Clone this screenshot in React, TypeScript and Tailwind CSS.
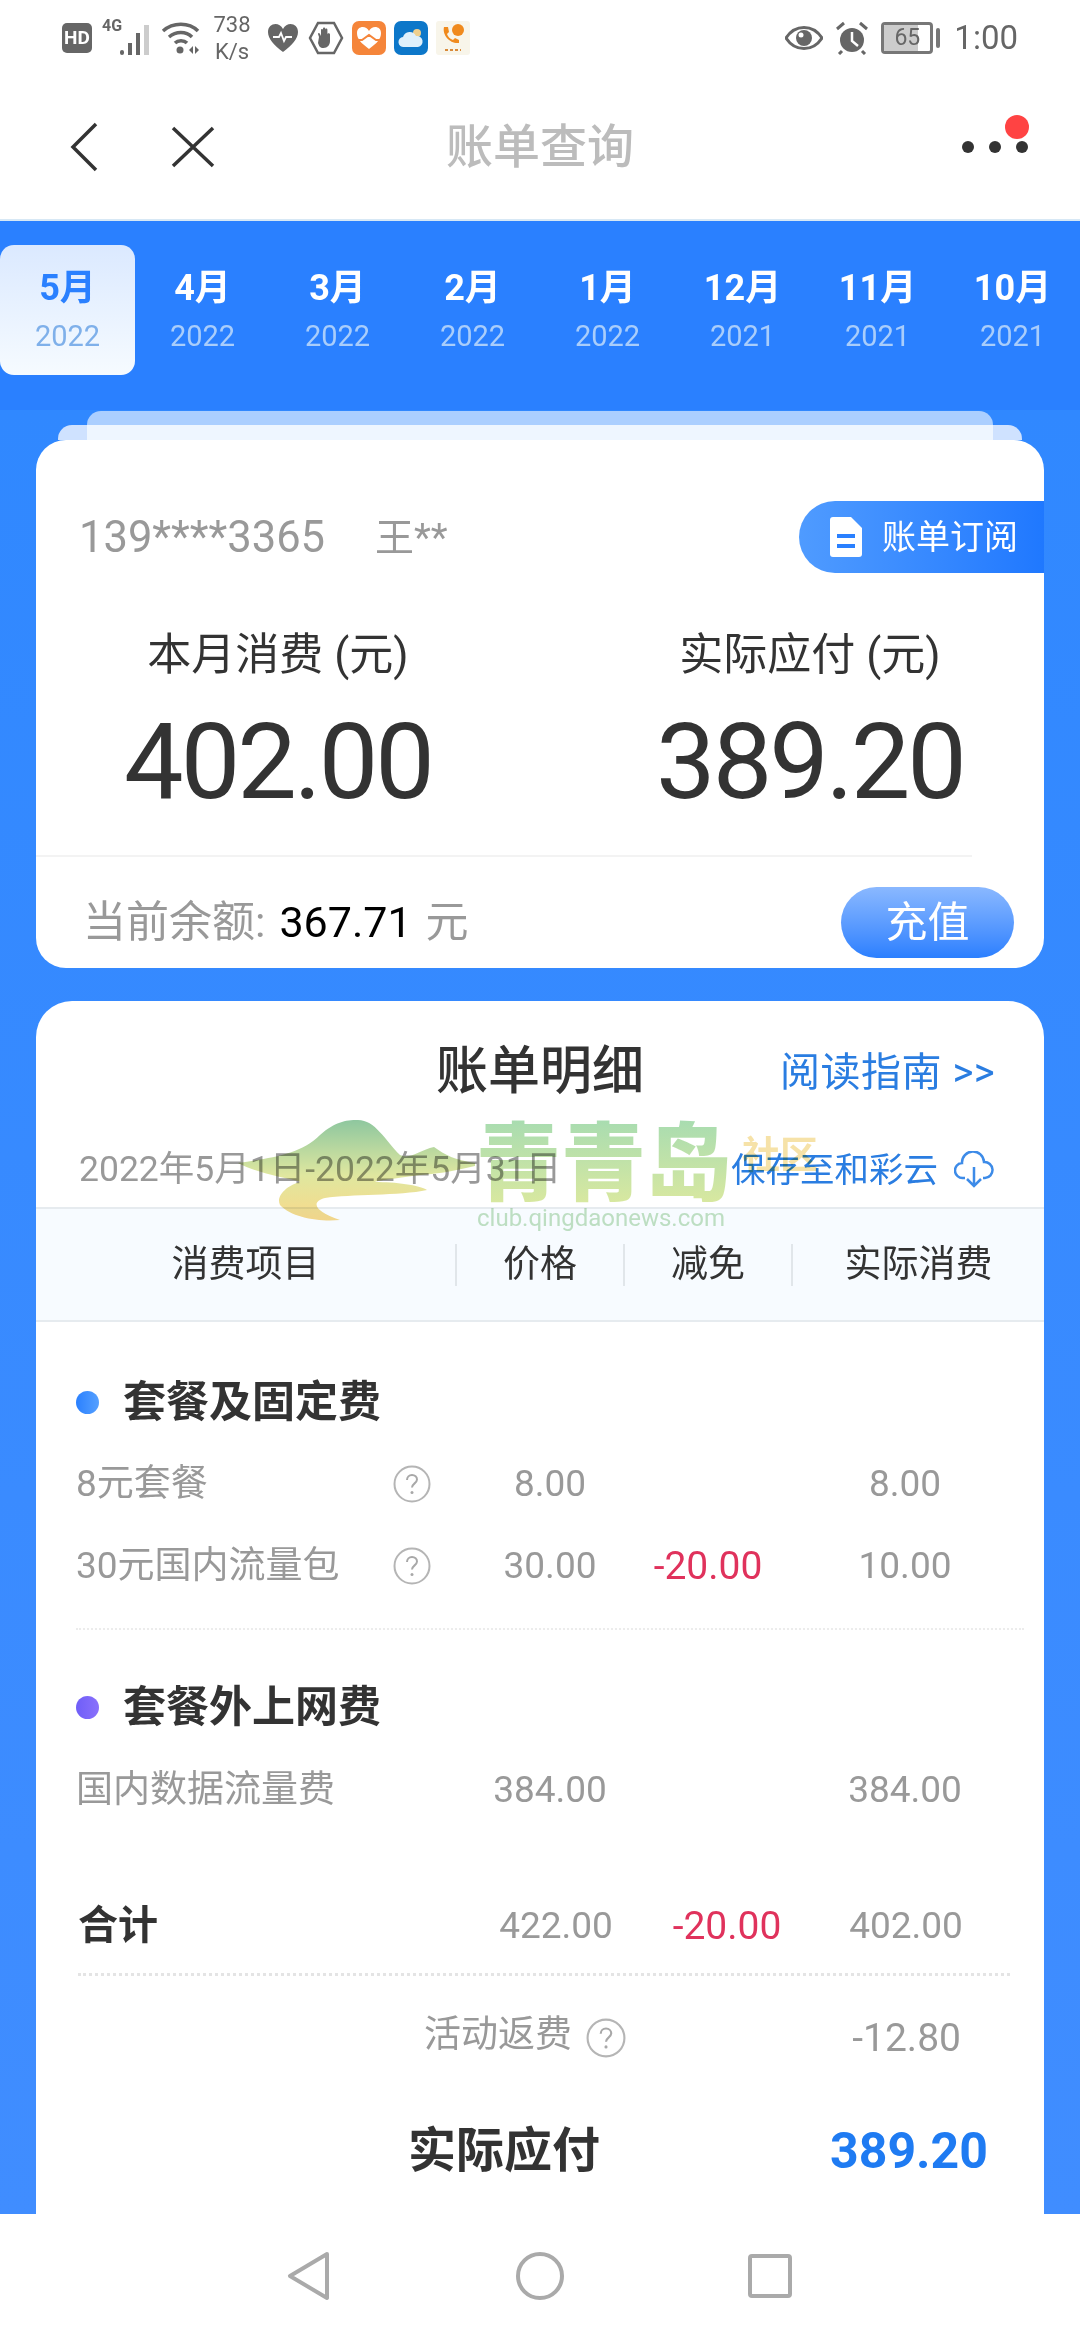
import React from 'react';

const months = [
  { m: '5月', y: '2022', active: true },
  { m: '4月', y: '2022' },
  { m: '3月', y: '2022' },
  { m: '2月', y: '2022' },
  { m: '1月', y: '2022' },
  { m: '12月', y: '2021' },
  { m: '11月', y: '2021' },
  { m: '10月', y: '2021' },
];

const Help = ({ size = 38 }: { size?: number }) => (
  <svg width={size} height={size} viewBox="0 0 38 38" className="shrink-0">
    <circle cx="19" cy="19" r="17.5" fill="none" stroke="#b5b5b5" strokeWidth="2" />
    <path d="M14 15c0-3 2.200-5 5-5s5 2 5 4.600c0 3.600-5 4-5 8" fill="none" stroke="#a8a8a8" strokeWidth="2" />
    <circle cx="19" cy="27.500" r="1.500" fill="#a8a8a8" />
  </svg>
);

const StatusBar = () => (
  <div className="h-[75px] flex items-center justify-between pl-[62px] pr-[62px] text-[#666]">
    <div className="flex items-center">
      <div className="w-[30px] h-[30px] rounded-[5px] bg-[#666] text-white text-[19px] font-bold flex items-center justify-center leading-none">HD</div>
      <div className="relative w-[50px] h-[40px] ml-[10px]">
        <span className="absolute left-0 top-0 text-[16px] font-bold leading-[16px]">4G</span>
        <svg width="50" height="40" viewBox="0 0 50 40">
          <rect x="18" y="32" width="4" height="5" rx="2" fill="#666" />
          <rect x="26" y="25" width="4" height="12" fill="#666" />
          <rect x="34" y="15" width="4" height="22" fill="#666" />
          <rect x="42" y="7" width="5" height="30" fill="#ccc" />
        </svg>
      </div>
      <svg width="40" height="32" viewBox="0 0 40 32" className="ml-[9px]">
        <path d="M2 9c10-9 26-9 35 0M8 15c7-6 17-6 23 0M14 21c3-3 9-3 12 0" fill="none" stroke="#666" strokeWidth="3.500" />
        <circle cx="19" cy="28" r="3.500" fill="#666" />
        <path d="M32 24v8l-4-4zM34 24v8l4-4z" fill="#666" />
      </svg>
      <div className="w-[40px] ml-[11px] text-center text-[22px] leading-[27px]">
        <div>738</div>
        <div>K/s</div>
      </div>
      <svg width="32" height="30" viewBox="0 0 32 30" className="ml-[15px]">
        <path d="M16 29C7 22 1 16 1 9c0-9 11-11 15-3 4-8 15-6 15 3 0 7-6 13-15 20z" fill="#666" />
        <path d="M6 14h6l2-4 3 8 2-4h6" fill="none" stroke="#fff" strokeWidth="1.800" />
      </svg>
      <svg width="36" height="34" viewBox="0 0 36 34" className="ml-[9px]">
        <path d="M10 2h16l8 15-8 15H10L2 17z" fill="#fff" stroke="#666" strokeWidth="2.500" />
        <path d="M11 16l-1-3c0-1.500 1.500-1.500 2 0l1 2V9c0-1.500 2-1.500 2 0V7.500c0-1.500 2.200-1.500 2.200 0V8.500c0-1.500 2.200-1.500 2.200 0v5c0-2 2.600-1.500 2.600 0V20c0 4-2.500 7-6.500 7-3.500 0-4.500-2-5.500-5z" fill="#666" />
      </svg>
      <div className="w-[34px] h-[34px] ml-[8px] rounded-[7px] bg-[#f5853a] flex items-center justify-center">
        <svg width="26" height="24" viewBox="0 0 26 24">
          <path d="M13 23C5 17 1 13 1 7c0-7 9-8 12-2 3-6 12-5 12 2 0 6-4 10-12 16z" fill="#fff" />
          <path d="M0 14h6l7-5 7 5h6" fill="none" stroke="#f5853a" strokeWidth="2" />
        </svg>
      </div>
      <div className="w-[34px] h-[34px] ml-[8px] rounded-[7px] bg-[#0d77c9] flex items-center justify-center">
        <svg width="26" height="22" viewBox="0 0 26 22">
          <circle cx="19" cy="6" r="4" fill="#eecf8e" />
          <path d="M6 20a5 5 0 0 1-1-10 7 7 0 0 1 13-1 5.500 5.500 0 0 1 2 11z" fill="#dff0fb" />
        </svg>
      </div>
      <div className="w-[34px] h-[34px] ml-[8px] rounded-[3px] bg-[#f8f5ea] flex items-center justify-center">
        <svg width="28" height="30" viewBox="0 0 28 30">
          <path d="M5 4l4 0 1 5-2 2c1 3 3 5 6 6l2-2 4 2v3c-9 1-17-8-15-16z" fill="#f08a1d" />
          <circle cx="19" cy="7" r="6" fill="#f08a1d" />
          <path d="M6 27h16" stroke="#d98a3a" strokeWidth="2" strokeDasharray="3 2" />
        </svg>
      </div>
    </div>
    <div className="flex items-center">
      <svg width="38" height="30" viewBox="0 0 38 30">
        <path d="M1 15C10 1 28 1 37 15 28 29 10 29 1 15z" fill="#fff" stroke="#666" strokeWidth="3" />
        <circle cx="19" cy="15" r="8" fill="#666" />
        <circle cx="16" cy="12" r="2.500" fill="#fff" />
      </svg>
      <svg width="34" height="34" viewBox="0 0 34 34" className="ml-[12px]">
        <circle cx="17" cy="19" r="12" fill="#666" />
        <path d="M17 11v9l6 5" fill="none" stroke="#fff" strokeWidth="2.500" />
        <path d="M2 8l7-6M32 8l-7-6M7 30l-3 3M27 30l3 3" stroke="#666" strokeWidth="3" />
      </svg>
      <div className="ml-[12px] flex items-center">
        <div className="relative w-[52px] h-[32px] rounded-[4px] border-[3px] border-[#777] overflow-hidden flex items-center justify-center">
          <div className="absolute left-0 top-0 bottom-0 w-[34px] bg-[#ccc]" />
          <span className="relative text-[23px] leading-none">65</span>
        </div>
        <div className="w-[4px] h-[20px] ml-[3px] rounded-[2px] bg-[#777]" />
      </div>
      <span className="ml-[14px] text-[33px] leading-none">1:00</span>
    </div>
  </div>
);

const Header = () => (
  <div className="relative h-[146px] flex items-center justify-center border-b-[2px] border-[#d7e8f5]">
    <div className="absolute left-[68px] top-[46px] flex items-center">
      <svg width="32" height="52" viewBox="0 0 32 52">
        <path d="M28 3L5 26l23 23" fill="none" stroke="#333" strokeWidth="3.500" />
      </svg>
      <svg width="46" height="44" viewBox="0 0 46 44" className="ml-[70px]">
        <path d="M3 3l40 38M43 3L3 41" fill="none" stroke="#333" strokeWidth="3.500" />
      </svg>
    </div>
    <span className="text-[47px] text-[#bcbcbc] font-medium leading-none -mt-[2px]">账单查询</span>
    <div className="absolute left-[962px] top-[40px] w-[70px] h-[40px]">
      <div className="absolute left-0 top-[26px] w-[12px] h-[12px] rounded-full bg-[#333]" />
      <div className="absolute left-[27px] top-[26px] w-[12px] h-[12px] rounded-full bg-[#333]" />
      <div className="absolute left-[54px] top-[26px] w-[12px] h-[12px] rounded-full bg-[#333]" />
      <div className="absolute left-[43px] top-0 w-[24px] h-[24px] rounded-full bg-[#ff4343]" />
    </div>
  </div>
);

const MonthTabs = () => (
  <div className="h-[189px] bg-[#2a80ff] pt-[24px] flex items-start shrink-0">
    {months.map((t) => (
      <div
        key={t.m + t.y}
        className={
          t.active
            ? 'w-[135px] h-[130px] rounded-[14px] bg-gradient-to-b from-[#dbe9ff] to-[#f6fbff] flex flex-col items-center pt-[21px]'
            : 'w-[135px] h-[130px] flex flex-col items-center pt-[21px]'
        }
      >
        <span className={t.active ? 'text-[36px] font-bold leading-[44px] text-[#2a80ff]' : 'text-[36px] font-bold leading-[44px] text-white'}>{t.m}</span>
        <span className={t.active ? 'text-[29px] leading-[36px] mt-[8px] text-[#7fb0ea]' : 'text-[29px] leading-[36px] mt-[8px] text-[#a9cdfb]'}>{t.y}</span>
      </div>
    ))}
  </div>
);

const SummaryCard = () => (
  <div className="relative h-[528px] mx-[36px] rounded-[30px] bg-white">
    <div className="flex items-center pt-[78px] pl-[43px] h-[118px]">
      <span className="text-[43.500px] leading-none text-[#999] w-[296px]">139****3365</span>
      <span className="text-[39px] leading-none text-[#999]">王**</span>
    </div>
    <div className="absolute right-0 top-[61px] w-[245px] h-[72px] rounded-l-[36px] bg-gradient-to-r from-[#4f9bff] to-[#1f78ff] flex items-center pl-[31px]">
      <svg width="32" height="40" viewBox="0 0 32 40">
        <path d="M3 0h18l11 11v26a3 3 0 0 1-3 3H3a3 3 0 0 1-3-3V3a3 3 0 0 1 3-3z" fill="#fff" />
        <rect x="7" y="17" width="18" height="4" fill="#2a80ff" />
        <rect x="7" y="27" width="18" height="4" fill="#2a80ff" />
      </svg>
      <span className="ml-[20px] text-[34px] text-white leading-none">账单订阅</span>
    </div>
    <div className="grid grid-cols-2 w-[1064px] -ml-[28px] mt-[72px] text-[#333]">
      {[
        { label: '本月消费', value: '402.00' },
        { label: '实际应付', value: '389.20' },
      ].map((c) => (
        <div key={c.label} className="flex flex-col items-center">
          <span className="text-[44px] leading-[50px] ml-[8px]">{c.label} (元)</span>
          <span className="text-[106px] leading-[100px] mt-[32px] ml-[8px] tracking-[-3px]">{c.value}</span>
        </div>
      ))}
    </div>
    <div className="w-[936px] h-[2px] mt-[43px] bg-[#f3f3f3]" />
    <div className="flex items-center justify-between pl-[47px] pr-[30px] mt-[30px]">
      <div className="flex items-baseline text-[43px] text-[#999] leading-none">
        <span>当前余额:</span>
        <span className="ml-[14px] text-[43px] text-black">367.71</span>
        <span className="ml-[14px]">元</span>
      </div>
      <div className="w-[173px] h-[71px] rounded-full bg-gradient-to-b from-[#8ab8ff] to-[#2a7fff] text-white text-[42px] flex items-center justify-center leading-none">充值</div>
    </div>
  </div>
);

const Watermark = () => (
  <div className="absolute z-10 left-[194px] top-[119px] w-[610px] h-[110px] pointer-events-none mix-blend-multiply">
    <svg width="250" height="106" viewBox="0 0 250 106" className="absolute left-0 top-0">
      <defs>
        <linearGradient id="mt" x1="0" y1="0" x2="0" y2="1">
          <stop offset="0" stopColor="#8ec79f" />
          <stop offset="0.55" stopColor="#dfe79f" />
          <stop offset="1" stopColor="#f9d98a" />
        </linearGradient>
      </defs>
      <path d="M8 43C40 38 70 35 90 15 105 2 115 0 128 0c17 0 27 20 42 35 10 5 20-5 34-8 11 8 21 13 41 16v3c-25 6-40 8-55 9-20 3-40 5-45 7 20 0 45 3 52 8-27 6-77 4-102 8-15 4-10 14 15 22-20 2-48-2-60-15-5-10 10-21 20-23C70 60 30 55 8 43z" fill="url(#mt)" />
    </svg>
    <span className="absolute left-[246px] top-0 text-[85px] leading-[90px] font-black text-transparent bg-gradient-to-b from-[#a8dcb0] to-[#dce99e] bg-clip-text whitespace-nowrap">青青岛</span>
    <span className="absolute left-[512px] top-[16px] text-[38px] leading-none font-bold text-[#f6e2a8]">社区</span>
    <span className="absolute left-[247px] top-[86px] text-[24px] leading-none text-[#c3e2c2] whitespace-nowrap">club.qingdaonews.com</span>
  </div>
);

const rowGrid = 'grid grid-cols-[394px_160px_156px_238px] ml-[40px] h-[82px] items-center text-[37px] text-[#999]';

const SectionTitle = ({ title, dot }: { title: string; dot: string }) => (
  <div className="flex items-center h-[60px] ml-[40px]">
    <div className={'w-[23px] h-[23px] rounded-full ' + dot} />
    <span className="ml-[24px] text-[43px] font-bold text-[#333] leading-none">{title}</span>
  </div>
);

const Row = ({ name, price, off, real, help }: { name: string; price: string; off?: string; real: string; help?: boolean }) => (
  <div className={rowGrid}>
    <div className="flex items-center justify-between pr-[39px]">
      <span>{name}</span>
      {help && <Help />}
    </div>
    <span className="text-center">{price}</span>
    <span className="text-center text-[39px] text-[#e0325c]">{off}</span>
    <span className="text-center">{real}</span>
  </div>
);

const DetailCard = () => (
  <div className="relative mx-[36px] mt-[33px] h-[1300px] rounded-t-[36px] bg-white">
    <div>
      <div className="relative h-[116px] flex items-center justify-center pt-[26px]">
        <span className="text-[52px] text-[#333] leading-none font-medium">账单明细</span>
        <span className="absolute left-[744px] top-[52px] text-[40px] tracking-[0.5px] text-[#2a7de1] leading-none whitespace-nowrap">阅读指南 &gt;&gt;</span>
      </div>
      <div className="h-[90px] flex items-center justify-between pl-[43px] pr-[50px] pt-[16px]">
        <span className="text-[35.500px] text-[#999] leading-none">2022年5月1日-2022年5月31日</span>
        <div className="flex items-center">
          <span className="text-[34.500px] text-[#2a7de1] leading-none">保存至和彩云</span>
          <svg width="40" height="38" viewBox="0 0 40 38" className="ml-[16px]">
            <path d="M11 27H9a7.500 7.500 0 0 1-1-15 11 11 0 0 1 22-1 8 8 0 0 1 1 16h-2" fill="none" stroke="#3d8be8" strokeWidth="2.500" />
            <path d="M20 16v19M13 28l7 7 7-7" fill="none" stroke="#3d8be8" strokeWidth="2.500" />
          </svg>
        </div>
      </div>
      <div className="h-[115px] flex items-center bg-[#f7fbff] border-y-[2px] border-[#e6ebef] text-[37px] text-[#333]">
        <div className="w-[419px] text-center leading-none">消费项目</div>
        <div className="w-[168px] h-[42px] flex items-center justify-center border-l-[2px] border-[#e1e6ea]">价格</div>
        <div className="w-[168px] h-[42px] flex items-center justify-center border-l-[2px] border-[#e1e6ea]">减免</div>
        <div className="w-[253px] h-[42px] flex items-center justify-center border-l-[2px] border-[#e1e6ea]">实际消费</div>
      </div>
    </div>
    <Watermark />
    <div className="pt-[50px]">
      <SectionTitle title="套餐及固定费" dot="bg-gradient-to-r from-[#2a80ff] to-[#55a0ff]" />
      <div className="mt-[11px]">
        <Row name="8元套餐" price="8.00" real="8.00" help />
        <Row name="30元国内流量包" price="30.00" off="-20.00" real="10.00" help />
      </div>
      <div className="ml-[40px] w-[948px] mt-[21px] border-t-[2px] border-dotted border-[#ececec]" />
      <div className="mt-[47px]">
        <SectionTitle title="套餐外上网费" dot="bg-gradient-to-r from-[#6f5ef8] to-[#8a70fb]" />
      </div>
      <div className="mt-[12px]">
        <Row name="国内数据流量费" price="384.00" real="384.00" />
      </div>
      <div className="grid grid-cols-[398px_160px_182px_176px] ml-[42px] mt-[55px] h-[80px] items-center text-[37px] text-[#999]">
        <span className="text-[40px] font-bold text-[#333]">合计</span>
        <span className="text-center">422.00</span>
        <span className="text-center text-[39px] text-[#e0325c]">-20.00</span>
        <span className="text-center">402.00</span>
      </div>
      <div className="ml-[42px] w-[932px] mt-[7px] border-t-[3px] border-dotted border-[#e4e4e4]" />
      <div className="flex items-center justify-between ml-[388px] w-[537px] h-[80px] mt-[22px] text-[39px] text-[#999]">
        <div className="flex items-center">
          <span className="text-[37px] leading-none -mt-[8px]">活动返费</span>
          <div className="ml-[14px]"><Help size={40} /></div>
        </div>
        <span>-12.80</span>
      </div>
      <div className="flex items-center justify-between ml-[372px] w-[580px] h-[60px] mt-[43px]">
        <span className="text-[48px] font-bold text-[#333] leading-none">实际应付</span>
        <span className="text-[50px] font-bold text-[#1f7bf2] leading-none">389.20</span>
      </div>
    </div>
  </div>
);

const NavBar = () => (
  <div className="h-[126px] bg-white flex items-center justify-center shrink-0 pb-[2px]">
    <svg width="46" height="50" viewBox="0 0 46 50" className="-ml-[2px]">
      <path d="M41 3L4 25l37 22z" fill="none" stroke="#aaa" strokeWidth="4" strokeLinejoin="round" />
    </svg>
    <svg width="50" height="50" viewBox="0 0 50 50" className="ml-[183px]">
      <circle cx="25" cy="25" r="22" fill="none" stroke="#aaa" strokeWidth="4" />
    </svg>
    <svg width="44" height="44" viewBox="0 0 44 44" className="ml-[183px]">
      <rect x="2" y="2" width="40" height="40" rx="2" fill="none" stroke="#aaa" strokeWidth="4" />
    </svg>
  </div>
);

export default function App() {
  return (
    <div className="w-[1080px] h-[2340px] flex flex-col overflow-hidden bg-white font-['Roboto','Noto_Sans_CJK_SC',sans-serif]">
      <StatusBar />
      <Header />
      <MonthTabs />
      <div className="flex-1 min-h-0 overflow-hidden bg-gradient-to-b from-[#3088ff] to-[#408dff]">
        {/* stacked card edges */}
        <div className="mx-[87px] h-[14px] rounded-t-[14px] bg-[#abcfff] mt-[1px]" />
        <div className="mx-[58px] h-[15px] rounded-t-[14px] bg-[#cfe2ff] px-[29px]">
          <div className="h-full bg-[#eef6ff]" />
        </div>
        <SummaryCard />
        <DetailCard />
      </div>
      <NavBar />
    </div>
  );
}
